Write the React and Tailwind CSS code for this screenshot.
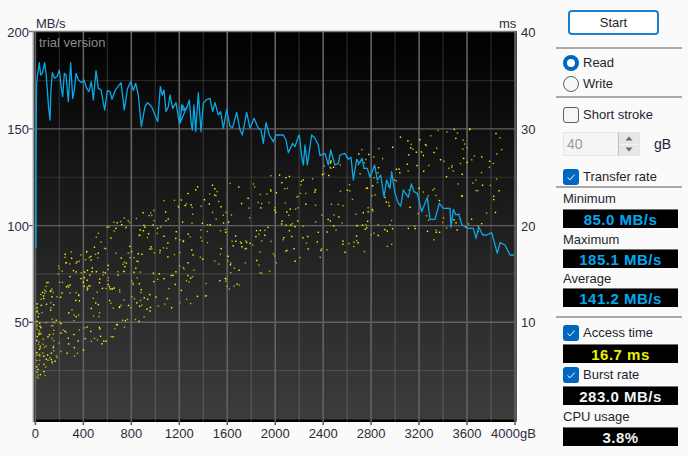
const seg = (ox, oy, pts) => pts.map(([x, y]) => [ox + x / 3, oy + y / 3]);

// transfer rate curve, read off the plot
const curve = [
  [36, 248], [36, 160], [36.5, 85],
  ...seg(20, 50, [[52, 80], [58, 38], [62, 75], [67, 70], [74, 38], [78, 70], [82, 120], [86, 175], [90, 210], [93, 120], [97, 68], [104, 85], [112, 78], [118, 60], [124, 115], [128, 140], [133, 70], [138, 75], [145, 155], [152, 38], [158, 145], [163, 120], [168, 70], [175, 90], [185, 98], [192, 90], [200, 115], [207, 125], [214, 95], [220, 150], [228, 62], [235, 115], [243, 120], [254, 180], [262, 122], [270, 125], [276, 148], [285, 122], [303, 98], [313, 180], [322, 118], [332, 95], [340, 122], [347, 100], [355, 135], [364, 230], [375, 170], [383, 158], [395, 170], [413, 215], [421, 110], [427, 135], [432, 120], [438, 185], [445, 170], [450, 135], [458, 175], [468, 158], [478, 220], [487, 165], [497, 180], [505, 160]]),
  ...seg(180, 80, [[0, 130], [5, 75], [10, 92], [20, 85], [28, 60], [33, 125], [37, 150], [42, 75], [47, 155], [55, 38], [63, 155], [70, 70], [78, 60], [90, 55], [98, 95], [105, 68], [115, 105], [122, 95], [130, 145], [140, 88], [150, 140], [158, 142], [170, 97], [180, 150], [187, 165], [200, 97], [210, 145], [222, 115], [235, 145], [243, 150], [250, 190], [258, 128], [268, 165], [280, 185], [288, 165], [310, 165], [318, 180], [325, 218]]),
  ...seg(290, 125, [[8, 55], [15, 65], [25, 35], [28, 30], [35, 95], [40, 120], [45, 60], [52, 120], [60, 65], [65, 30], [75, 40], [85, 60], [90, 92], [105, 85], [115, 120], [122, 75], [135, 120], [145, 115]]),
  ...seg(340, 100, [[0, 165], [15, 160], [25, 178], [33, 172], [40, 240], [50, 178], [58, 190], [66, 175], [72, 205], [82, 205], [90, 232], [104, 195], [112, 240], [122, 225], [132, 290], [140, 240], [150, 265], [155, 215], [165, 280], [175, 310], [182, 318], [190, 270], [205, 292], [214, 252], [222, 275], [232, 280], [245, 335], [262, 292], [270, 358], [285, 358], [298, 310], [310, 325], [330, 325], [333, 382], [340, 328], [348, 345], [356, 342], [366, 375], [385, 385], [400, 385], [408, 415], [416, 380], [428, 405], [440, 405], [455, 398], [472, 460], [480, 428], [495, 435], [510, 465], [522, 465]]),
];

const lerp = (table, x) => {
  for (let i = 1; i < table.length; i++) {
    if (x <= table[i][0]) {
      const [x0, y0] = table[i - 1];
      const [x1, y1] = table[i];
      return y0 + ((y1 - y0) * (x - x0)) / (x1 - x0);
    }
  }
  return table[table.length - 1][1];
};

const lowEdge = [[36, 382], [60, 362], [100, 345], [130, 325], [200, 300], [300, 262], [400, 245], [515, 225]];
const highEdge = [[36, 300], [60, 255], [100, 225], [130, 210], [200, 185], [300, 165], [400, 130], [515, 125]];

// access time dots, fixed seed so every render is the same
let seed = 1234;
const rnd = () => {
  seed = (seed * 16807) % 2147483647;
  return seed / 2147483647;
};
const dots = Array.from({ length: 760 }, () => {
  const x = 36 + 465 * Math.pow(rnd(), 1.7);
  const high = lerp(highEdge, x);
  const low = lerp(lowEdge, x);
  const y = high + (low - high) * rnd();
  return { x, y, bright: rnd() > 0.55 };
});

const xPos = (gb) => 35.4 + 0.1199 * gb;
const yPos = (mb) => 419 - 1.934 * mb;
const xMajor = [0, 400, 800, 1200, 1600, 2000, 2400, 2800, 3200, 3600, 4000];
const xMinor = [200, 600, 1000, 1400, 1800, 2200, 2600, 3000, 3400, 3800];
const yMajor = [150, 100, 50];
const yMinor = [175, 125, 75, 25];
const labelFont = { fontFamily: '"Liberation Sans", sans-serif', fontSize: 13 };

function Chart() {
  return (
    <svg width="540" height="456" viewBox="0 0 540 456" className="shrink-0 block" style={labelFont}>
      <defs>
        <linearGradient id="plotBg" x1="0" y1="0" x2="0" y2="1">
          <stop offset="0" stopColor="#000000" />
          <stop offset="1" stopColor="#3d3d3d" />
        </linearGradient>
      </defs>
      <rect x="33" y="31" width="484" height="390" fill="url(#plotBg)" />
      <rect x="34" y="32" width="2" height="390" fill="#000000" />
      <rect x="34" y="419.5" width="482" height="2.5" fill="#000000" />

      {yMinor.map((m) => (
        <line key={m} x1="36" x2="516" y1={yPos(m)} y2={yPos(m)} stroke="#ffffff" strokeOpacity="0.12" strokeWidth="1.2" />
      ))}
      {xMinor.map((g) => (
        <line key={g} x1={xPos(g)} x2={xPos(g)} y1="32" y2="423" stroke="#ffffff" strokeOpacity="0.13" strokeWidth="1.4" />
      ))}
      {yMajor.map((m) => (
        <line key={m} x1="29" x2="516" y1={yPos(m)} y2={yPos(m)} stroke="#606060" strokeWidth="1.4" />
      ))}
      {xMajor.map((g) => (
        <line key={g} x1={xPos(g)} x2={xPos(g)} y1="32" y2="425" stroke="#626262" strokeWidth="1.6" />
      ))}

      <line x1="29" x2="517" y1="31.5" y2="31.5" stroke="#7a7a7a" strokeWidth="1.6" />
      <line x1="33.4" x2="33.4" y1="31" y2="422" stroke="#9a9a9a" strokeWidth="1.6" />
      <line x1="516" x2="516" y1="31" y2="422" stroke="#5c5c5c" strokeWidth="1.6" />

      {dots.map((d, i) => (
        <rect
          key={i}
          x={d.x}
          y={d.y}
          width="1.4"
          height="1.4"
          fill={d.bright ? '#ffff00' : '#b4b414'}
        />
      ))}
      <polyline
        points={curve.map((p) => p.join(',')).join(' ')}
        fill="none"
        stroke="#0aa9e6"
        strokeWidth="1.3"
        strokeLinejoin="round"
      />

      <text x="39" y="47" fill="#8a8a8a">trial version</text>
      <text x="36" y="28" fill="#2b2b3a">MB/s</text>
      <text x="499" y="28" fill="#2b2b3a">ms</text>
      {[200, 150, 100, 50].map((m) => (
        <text key={m} x="29" y={yPos(m) + 5} textAnchor="end" fill="#2b2b3a">{m}</text>
      ))}
      {[40, 30, 20, 10].map((v, i) => (
        <text key={v} x="521" y={yPos(200 - i * 50) + 5} fill="#2b2b3a">{v}</text>
      ))}
      {xMajor.slice(0, 10).map((g) => (
        <text key={g} x={xPos(g)} y="438" textAnchor="middle" fill="#2b2b3a">{g}</text>
      ))}
      <text x="491" y="438" fill="#2b2b3a">4000gB</text>
    </svg>
  );
}

function CheckBox({ checked }) {
  if (!checked) {
    return <span className="block w-4 h-4 shrink-0 rounded-[3px] border border-[#5f5f5f] bg-[#f6f6f6]" />;
  }
  return (
    <span className="flex items-center justify-center w-4 h-4 shrink-0 rounded-[3px] bg-[#0067c0]">
      <svg width="12" height="12" viewBox="0 0 12 12" fill="none">
        <path d="M2.5 6.4 L5 8.8 L9.6 3.6" stroke="#ffffff" strokeWidth="1" />
      </svg>
    </span>
  );
}

function Radio({ checked }) {
  if (checked) {
    return (
      <span className="flex items-center justify-center w-4 h-4 shrink-0 rounded-full bg-[#0067c0]">
        <span className="block w-2 h-2 rounded-full bg-white" />
      </span>
    );
  }
  return <span className="block w-4 h-4 shrink-0 rounded-full border border-[#5f5f5f] bg-[#f6f6f6]" />;
}

function ValueBox({ color, children }) {
  return (
    <div className={`flex items-center justify-center w-[115px] h-[19px] ml-[7px] bg-black border-t border-[#707070] font-bold text-[15px] tracking-[0.5px] leading-none ${color}`}>
      {children}
    </div>
  );
}

function Divider() {
  return <div className="h-0.5 bg-[#a9a9a9]" />;
}

export default function App() {
  return (
    <div
      className="flex w-[688px] h-[456px] overflow-hidden bg-[#fafafa] text-[13px] leading-4 text-[#1f1f2e]"
      style={{ fontFamily: '"Liberation Sans", sans-serif' }}
    >
      <Chart />
      <div className="w-[126px] ml-4 pt-[10px]">
        <button className="block w-[91px] h-[25px] ml-3 rounded-[4px] border-2 border-[#1a7fd0] bg-white text-center">
          Start
        </button>

        <div className="mt-3"><Divider /></div>
        <div className="flex items-center gap-1 ml-[7px] mt-[6px]"><Radio checked />Read</div>
        <div className="flex items-center gap-1 ml-[7px] mt-[5px]"><Radio />Write</div>
        <div className="mt-[4px]"><Divider /></div>

        <div className="flex items-center gap-1 ml-[7px] mt-[9px]"><CheckBox />Short stroke</div>
        <div className="flex items-center ml-[7px] mt-[9px]">
          <div className="flex items-stretch w-[77px] h-[24px] border border-[#e4e4e4] bg-[#f5f5f5]">
            <span className="flex-1 pl-[3px] text-[14px] leading-[22px] text-[#9a9a9a]">40</span>
            <div className="flex flex-col w-[21px] bg-[#e6e6e6] border-l border-[#bdbdbd]">
              <span className="flex flex-1 items-center justify-center border-b border-[#f5f5f5]">
                <svg width="8" height="5" viewBox="0 0 8 5"><path d="M4 0.5 L7.5 4.5 H0.5 Z" fill="#6a6a6a" /></svg>
              </span>
              <span className="flex flex-1 items-center justify-center">
                <svg width="8" height="5" viewBox="0 0 8 5"><path d="M4 4.5 L7.5 0.5 H0.5 Z" fill="#6a6a6a" /></svg>
              </span>
            </div>
          </div>
          <span className="ml-[14px] text-[14px]">gB</span>
        </div>

        <div className="flex items-center gap-1 ml-[7px] mt-[13px]"><CheckBox checked />Transfer rate</div>
        <div className="mt-[1px]"><Divider /></div>

        <div className="ml-[7px] mt-[3px]">Minimum</div>
        <div className="mt-[2px]"><ValueBox color="text-[#00a8f0]">85.0 MB/s</ValueBox></div>
        <div className="ml-[7px] mt-[4px]">Maximum</div>
        <div className="mt-[1px]"><ValueBox color="text-[#00a8f0]">185.1 MB/s</ValueBox></div>
        <div className="ml-[7px] mt-[3px]">Average</div>
        <div className="mt-[1px]"><ValueBox color="text-[#00a8f0]">141.2 MB/s</ValueBox></div>
        <div className="mt-[9px]"><Divider /></div>

        <div className="flex items-center gap-1 ml-[7px] mt-[7px]"><CheckBox checked />Access time</div>
        <div className="mt-[3px]"><ValueBox color="text-[#e8f000]">16.7 ms</ValueBox></div>
        <div className="flex items-center gap-1 ml-[7px] mt-[4px]"><CheckBox checked />Burst rate</div>
        <div className="mt-[3px]"><ValueBox color="text-[#f2f2f2]">283.0 MB/s</ValueBox></div>
        <div className="ml-[7px] mt-[4px]">CPU usage</div>
        <div className="mt-[2px]"><ValueBox color="text-[#f2f2f2]">3.8%</ValueBox></div>
      </div>
    </div>
  );
}
